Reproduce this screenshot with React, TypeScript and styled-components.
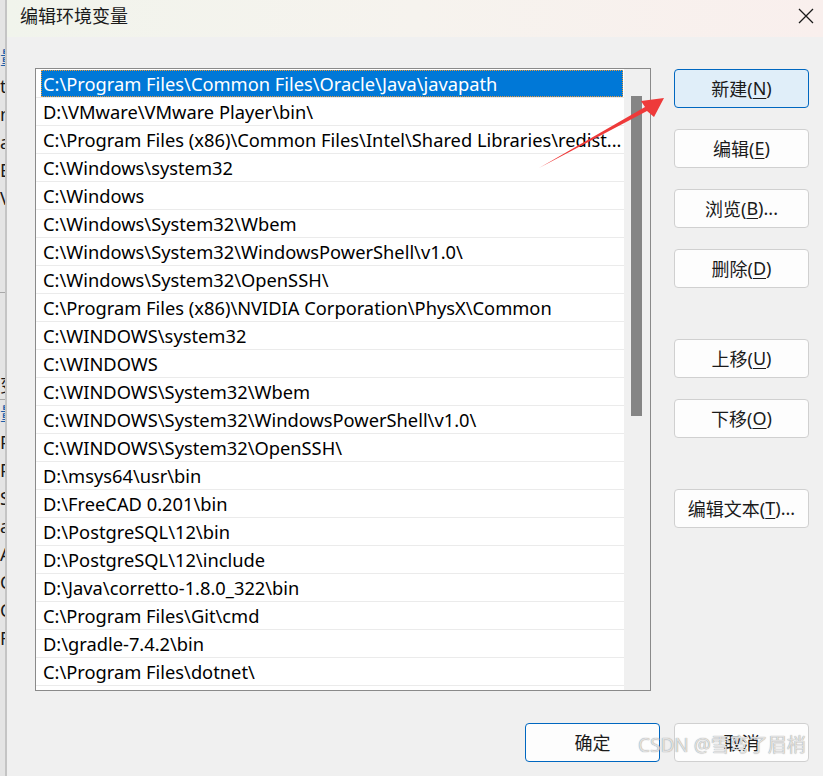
import styled, { createGlobalStyle } from 'styled-components';

const GlobalStyle = createGlobalStyle`
  html, body {
    margin: 0;
    padding: 0;
    background: #f0f0f0;
  }
  body {
    width: 823px;
    height: 776px;
    overflow: hidden;
    font-family: "Noto Sans", "Noto Sans CJK SC", sans-serif;
  }
`;

const Screen = styled.div`
  position: relative;
  display: flex;
  width: 823px;
  height: 776px;
  overflow: hidden;
`;

// the window behind the dialog, only a sliver of it shows
const BackWindow = styled.div`
  width: 5px;
  flex-shrink: 0;
  background: #e4e4e4;
  border-right: 2px solid #c4c4c4;
  overflow: hidden;
  display: flex;
  flex-direction: column;
  padding-top: 44px;
`;

interface FragmentProps {
  $line?: boolean;
  $blue?: boolean;
}

const Fragment = styled.div<FragmentProps>`
  height: 28px;
  line-height: 28px;
  font-size: 18px;
  white-space: nowrap;
  color: ${(p) => (p.$blue ? '#1d5fa8' : '#1a1a1a')};
  border-top: ${(p) => (p.$line ? '1px solid #a8a8a8' : 'none')};
`;

const Gap = styled.div<{ $h: number }>`
  height: ${(p) => p.$h}px;
`;

const Dialog = styled.div`
  flex: 1;
  display: flex;
  flex-direction: column;
  background: #f0f0f0;
`;

const TitleBar = styled.div`
  height: 37px;
  flex-shrink: 0;
  display: flex;
  align-items: center;
  justify-content: space-between;
  padding: 0 8px 0 13px;
  background: linear-gradient(90deg, #f1f4ec 0%, #f6f3ee 50%, #f9efed 100%);
`;

const Title = styled.div`
  font-family: "Noto Sans CJK SC", sans-serif;
  font-size: 18px;
  color: #1a1a1a;
  margin-top: -7px;
`;

const CloseButton = styled.div`
  width: 18px;
  height: 18px;
  display: flex;
  align-items: center;
  justify-content: center;
  margin-top: -5px;
`;

const Body = styled.div`
  flex: 1;
  display: flex;
  flex-direction: column;
  padding: 31px 14px 0 28px;
`;

const Main = styled.div`
  display: flex;
  gap: 23px;
`;

const ListBox = styled.div`
  width: 616px;
  height: 623px;
  box-sizing: border-box;
  border: 1px solid #8a8a8a;
  background: #ffffff;
  display: flex;
`;

const Items = styled.div`
  flex: 1;
  overflow: hidden;
  padding-top: 1px;
`;

const Row = styled.div`
  height: 28px;
  box-sizing: border-box;
  border-bottom: 1px solid #ebebeb;
  padding: 0 1px 0 5px;
`;

const Cell = styled.div<{ $active?: boolean }>`
  height: 27px;
  box-sizing: border-box;
  padding-left: 1px;
  font-size: 18.3px;
  line-height: 25px;
  white-space: nowrap;
  overflow: hidden;
  color: ${(p) => (p.$active ? '#ffffff' : '#000000')};
  background: ${(p) => (p.$active ? '#0078d7' : 'transparent')};
  border: 1px ${(p) => (p.$active ? 'dotted #e89a3c' : 'solid transparent')};
`;

const Track = styled.div`
  width: 26px;
  flex-shrink: 0;
  background: #f0f0f0;
  padding: 27px 8px 0 7px;
  box-sizing: border-box;
`;

const Thumb = styled.div`
  height: 320px;
  background: #858585;
`;

const SideButtons = styled.div`
  display: flex;
  flex-direction: column;
  padding-top: 1px;
`;

interface ButtonProps {
  $primary?: boolean;
  $default?: boolean;
  $space?: number;
}

const Button = styled.div<ButtonProps>`
  width: 135px;
  height: 39px;
  box-sizing: border-box;
  margin-top: ${(p) => p.$space ?? 0}px;
  display: flex;
  align-items: center;
  justify-content: center;
  border-radius: 4px;
  border: 1px solid ${(p) => (p.$primary || p.$default ? '#0067c0' : '#d0d0d0')};
  background: ${(p) => (p.$primary ? '#e0eef9' : '#fdfdfd')};
  font-family: "Noto Sans", "Noto Sans CJK SC", sans-serif;
  font-size: 18px;
  color: #1b1b1b;
  padding-bottom: 1px;

  u {
    text-underline-offset: 3px;
  }
`;

const Footer = styled.div`
  display: flex;
  justify-content: flex-end;
  gap: 14px;
  margin-top: 32px;
`;

const Arrow = styled.svg`
  position: absolute;
  left: 0;
  top: 0;
  pointer-events: none;
`;

const Watermark = styled.div`
  position: absolute;
  left: 638px;
  top: 730px;
  font-family: "Noto Sans", "Noto Sans CJK SC", sans-serif;
  font-size: 19px;
  color: rgba(240, 240, 240, 0.85);
  text-shadow: 0 0 1px #7a7a7a;
  white-space: nowrap;
`;

const paths = [
  'C:\\Program Files\\Common Files\\Oracle\\Java\\javapath',
  'D:\\VMware\\VMware Player\\bin\\',
  'C:\\Program Files (x86)\\Common Files\\Intel\\Shared Libraries\\redist...',
  'C:\\Windows\\system32',
  'C:\\Windows',
  'C:\\Windows\\System32\\Wbem',
  'C:\\Windows\\System32\\WindowsPowerShell\\v1.0\\',
  'C:\\Windows\\System32\\OpenSSH\\',
  'C:\\Program Files (x86)\\NVIDIA Corporation\\PhysX\\Common',
  'C:\\WINDOWS\\system32',
  'C:\\WINDOWS',
  'C:\\WINDOWS\\System32\\Wbem',
  'C:\\WINDOWS\\System32\\WindowsPowerShell\\v1.0\\',
  'C:\\WINDOWS\\System32\\OpenSSH\\',
  'D:\\msys64\\usr\\bin',
  'D:\\FreeCAD 0.201\\bin',
  'D:\\PostgreSQL\\12\\bin',
  'D:\\PostgreSQL\\12\\include',
  'D:\\Java\\corretto-1.8.0_322\\bin',
  'C:\\Program Files\\Git\\cmd',
  'D:\\gradle-7.4.2\\bin',
  'C:\\Program Files\\dotnet\\',
  '',
];

const sideButtons = [
  { label: '新建', key: 'N', tail: '', space: 0, primary: true },
  { label: '编辑', key: 'E', tail: '', space: 21 },
  { label: '浏览', key: 'B', tail: '...', space: 21 },
  { label: '删除', key: 'D', tail: '', space: 21 },
  { label: '上移', key: 'U', tail: '', space: 51 },
  { label: '下移', key: 'O', tail: '', space: 21 },
  { label: '编辑文本', key: 'T', tail: '...', space: 51 },
];

function App() {
  const selectedIndex = 0;

  return (
    <>
      <GlobalStyle />
      <Screen>
        <BackWindow>
          <Fragment $blue>量</Fragment>
          <Fragment>t</Fragment>
          <Fragment>n</Fragment>
          <Fragment>at</Fragment>
          <Fragment>El</Fragment>
          <Fragment>V</Fragment>
          <Gap $h={80} />
          <Fragment $line />
          <Gap $h={50} />
          <Fragment>变</Fragment>
          <Fragment $line $blue>量</Fragment>
          <Fragment>P</Fragment>
          <Fragment>P</Fragment>
          <Fragment>S</Fragment>
          <Fragment>at</Fragment>
          <Fragment>A</Fragment>
          <Fragment>C</Fragment>
          <Fragment>C</Fragment>
          <Fragment>R</Fragment>
        </BackWindow>

        <Dialog>
          <TitleBar>
            <Title>编辑环境变量</Title>
            <CloseButton>
              <svg width="16" height="16" viewBox="0 0 16 16">
                <path d="M1 1 L15 15 M15 1 L1 15" stroke="#1a1a1a" strokeWidth="1.3" />
              </svg>
            </CloseButton>
          </TitleBar>

          <Body>
            <Main>
              <ListBox>
                <Items>
                  {paths.map((path, index) => (
                    <Row key={index}>
                      <Cell $active={index === selectedIndex}>{path}</Cell>
                    </Row>
                  ))}
                </Items>
                <Track>
                  <Thumb />
                </Track>
              </ListBox>

              <SideButtons>
                {sideButtons.map((b) => (
                  <Button key={b.label} $primary={b.primary} $space={b.space}>
                    {b.label}(<u>{b.key}</u>){b.tail}
                  </Button>
                ))}
              </SideButtons>
            </Main>

            <Footer>
              <Button $default>确定</Button>
              <Button>取消</Button>
            </Footer>
          </Body>
        </Dialog>

        <Arrow width="823" height="776" viewBox="0 0 823 776">
          <polygon
            points="539,168 647,111 654,117 664,98 641,101 645,107"
            fill="#ee3a3a"
          />
        </Arrow>

        <Watermark>CSDN @雪弯了眉梢</Watermark>
      </Screen>
    </>
  );
}

export default App;
